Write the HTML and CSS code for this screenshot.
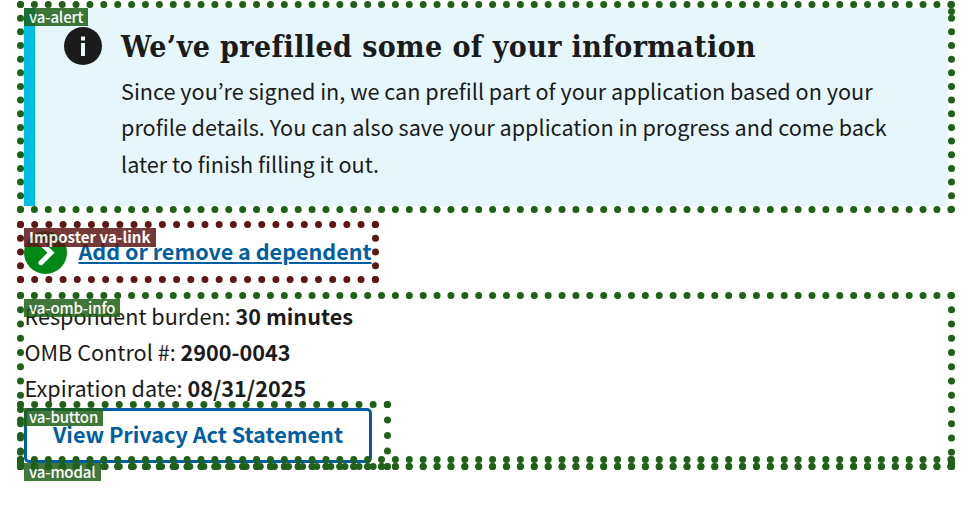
FILE: index.html
```html
<!DOCTYPE html>
<html lang="en">
<head>
<meta charset="utf-8">
<title>Application prefill</title>
<link rel="stylesheet" href="styles.css">
</head>
<body>
<main>
  <section class="alert marked">
    <span class="tag">va-alert</span>
    <svg class="info" viewBox="0 0 38 38"><circle cx="19" cy="19" r="19" fill="#1b1b1b"/><path d="M17 9.5h4v4h-4zM17 16h4v13h-4z" fill="#e7f6f8"/></svg>
    <div class="alert-body">
      <h2>We’ve prefilled some of your information</h2>
      <p>Since you’re signed in, we can prefill part of your application based on your<br>profile details. You can also save your application in progress and come back<br>later to finish filling it out.</p>
    </div>
  </section>
  <a class="action marked imposter">
    <span class="tag">Imposter va-link</span>
    <svg class="arrow" viewBox="0 0 43 43"><circle cx="21.5" cy="21.5" r="21.5" fill="#008817"/><path d="M17 12l10 9.7-10 10" fill="none" stroke="#fff" stroke-width="5" stroke-linecap="round" stroke-linejoin="miter"/></svg>
    <span class="action-text">Add or remove a dependent</span>
  </a>
  <section class="omb marked">
    <span class="tag">va-omb-info</span>
    <div class="row">Respondent burden: <b>30 minutes</b></div>
    <div class="row">OMB Control #: <b>2900-0043</b></div>
    <div class="row">Expiration date: <b>08/31/2025</b></div>
    <div class="button-host marked">
      <span class="tag">va-button</span>
      <button type="button">View Privacy Act Statement</button>
    </div>
    <div class="modal"><span class="tag">va-modal</span></div>
  </section>
</main>
</body>
</html>
```
FILE: styles.css
```css
* { box-sizing: border-box; }
body {
  display: flow-root;
  height: 505px;
  margin: 0;
  background: #fff;
  color: #1b1b1b;
  font-family: "Noto Sans CJK JP", "Noto Sans", sans-serif;
  font-size: 21.63px;
}
main { width: 924px; margin: 8px 0 0 24px; }
.marked { position: relative; outline: 7px dotted #1f6118; }
.imposter { outline-color: #5e1717; }
.tag {
  position: absolute;
  left: 0;
  top: 0;
  z-index: 2;
  height: 18px;
  padding: 0 5px;
  background: #1f6118;
  color: #fff;
  opacity: .85;
  font-size: 15px;
  font-weight: 500;
  letter-spacing: -.15px;
  line-height: 17px;
  white-space: nowrap;
}
.alert .tag { left: -11px; }
.imposter .tag { height: 19px; background: #5e1717; font-weight: 700; letter-spacing: .05px; line-height: 18px; }
.alert {
  display: flex;
  height: 198px;
  padding: 19px 0 0 29px;
  border-left: 11px solid #00bde3;
  background: #e7f6fb;
}
.alert::after {
  content: "";
  position: absolute;
  top: 0;
  right: -7px;
  width: 7px;
  height: 7px;
  border-radius: 50%;
  background: #1f6118;
}
.info { width: 38px; height: 38px; flex: none; }
.alert-body { margin-left: 19px; white-space: nowrap; }
h2 {
  margin: 0 0 7px;
  font-family: "DejaVu Serif", serif;
  font-stretch: condensed;
  font-size: 30px;
  font-weight: 700;
  letter-spacing: .4px;
  line-height: 40px;
}
p { margin: -1px 0 0; line-height: 36.4px; }
.action {
  display: flex;
  width: 348px;
  height: 48px;
  margin-top: 22px;
  color: #005ea2;
  font-size: 21.55px;
  font-weight: 700;
  white-space: nowrap;
}
.arrow { width: 43px; height: 43px; margin-top: 3px; flex: none; }
.action-text {
  margin-left: 11.5px;
  line-height: 46px;
  text-decoration: underline;
  text-decoration-thickness: 2px;
  text-underline-offset: 2px;
}
.omb { height: 164px; margin-top: 23px; }
.row { height: 36px; padding-left: .5px; line-height: 34px; white-space: nowrap; }
.button-host { width: 360px; height: 55px; margin-top: 1px; }
button {
  display: block;
  width: 348px;
  height: 55px;
  padding: 0 0 3px;
  border: 3px solid #005ea2;
  border-radius: 5px;
  background: #fff;
  color: #005ea2;
  font: 700 21.6px/46px "Noto Sans CJK JP", "Noto Sans", sans-serif;
}
.modal { position: relative; height: 0; }
.modal::before {
  content: "";
  position: absolute;
  inset: -7px;
  border: 7px dotted #1f6118;
}
```
